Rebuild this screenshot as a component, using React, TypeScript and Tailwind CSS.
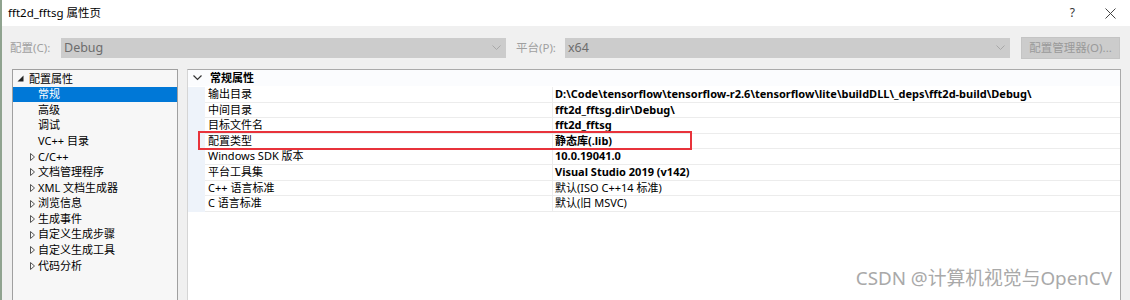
import React from 'react'

const treeItems = [
  { label: '配置属性', level: 0, open: true },
  { label: '常规', level: 1, selected: true },
  { label: '高级', level: 1 },
  { label: '调试', level: 1 },
  { label: 'VC++ 目录', level: 1 },
  { label: 'C/C++', level: 1, closed: true },
  { label: '文档管理程序', level: 1, closed: true },
  { label: 'XML 文档生成器', level: 1, closed: true },
  { label: '浏览信息', level: 1, closed: true },
  { label: '生成事件', level: 1, closed: true },
  { label: '自定义生成步骤', level: 1, closed: true },
  { label: '自定义生成工具', level: 1, closed: true },
  { label: '代码分析', level: 1, closed: true },
]

const props = [
  { name: '输出目录', value: 'D:\\Code\\tensorflow\\tensorflow-r2.6\\tensorflow\\lite\\buildDLL\\_deps\\fft2d-build\\Debug\\', bold: true },
  { name: '中间目录', value: 'fft2d_fftsg.dir\\Debug\\', bold: true },
  { name: '目标文件名', value: 'fft2d_fftsg', bold: true },
  { name: '配置类型', value: '静态库(.lib)', bold: true },
  { name: 'Windows SDK 版本', value: '10.0.19041.0', bold: true },
  { name: '平台工具集', value: 'Visual Studio 2019 (v142)', bold: true },
  { name: 'C++ 语言标准', value: '默认(ISO C++14 标准)', bold: false },
  { name: 'C 语言标准', value: '默认(旧 MSVC)', bold: false },
]

function Chevron() {
  return (
    <svg width="9" height="6" viewBox="0 0 9 6" className="text-[#a8a8a8]">
      <polyline points="0.5,0.5 4.5,4.5 8.5,0.5" fill="none" stroke="currentColor" strokeWidth="1" />
    </svg>
  )
}

function Combo({ value, width }: { value: string; width: string }) {
  return (
    <div className={`${width} h-[20px] bg-[#cccccc] flex items-center justify-between pl-[3px] pr-[5px] text-[#6d6d6d] text-[12.5px]`}>
      <span>{value}</span>
      <Chevron />
    </div>
  )
}

export default function App() {
  return (
    <div
      className="w-[1130px] h-[300px] bg-[#f0f0f0] overflow-hidden relative text-[11px] text-black border-l-2 border-[#8fa38f]"
      style={{ fontFamily: '"Noto Sans", "Noto Sans CJK SC", sans-serif' }}
    >
      {/* Title bar */}
      <div className="h-[26px] bg-white flex items-center justify-between pl-[6px] pr-[14px]">
        <span className="text-[11.5px]">fft2d_fftsg 属性页</span>
        <div className="flex items-center gap-[30px] text-[#333]">
          <span className="text-[12px]">?</span>
          <svg width="11" height="11" viewBox="0 0 11 11">
            <path d="M0.5 0.5 L10.5 10.5 M10.5 0.5 L0.5 10.5" stroke="#444" strokeWidth="1" />
          </svg>
        </div>
      </div>

      {/* Toolbar */}
      <div className="h-[43px] flex items-center pl-[8px] pt-[1px]">
        <span className="w-[51px] text-[#a0a0a0] text-[11.5px]">配置(C):</span>
        <Combo value="Debug" width="w-[445px]" />
        <span className="ml-[10px] w-[49px] text-[#a0a0a0] text-[11.5px]">平台(P):</span>
        <Combo value="x64" width="w-[445px]" />
        <div className="ml-[11px] w-[99px] h-[22px] bg-[#cccccc] border border-[#c4c4c4] flex items-center justify-center text-[#9a9a9a] text-[11.5px]">
          配置管理器(O)...
        </div>
      </div>

      {/* Main */}
      <div className="flex pl-[10px] gap-[9px] h-[240px]">
        {/* Tree */}
        <div className="w-[166px] h-full bg-[#f7f7f7] border border-[#a0a0a0] pt-[1px]">
          {treeItems.map((item) => (
            <div
              key={item.label}
              className={`h-[15.6px] flex items-center ${item.selected ? 'bg-[#0078d7] text-white' : ''}`}
            >
              {item.level === 0 ? (
                <>
                  <svg width="7" height="7" viewBox="0 0 7 7" className="ml-[4px] mr-[5px]">
                    <polygon points="6.5,0.5 6.5,6.5 0.5,6.5" fill="#222" />
                  </svg>
                  <span>{item.label}</span>
                </>
              ) : (
                <>
                  <span className="w-[25px] flex justify-end pr-[3px]">
                    {item.closed && (
                      <svg width="5" height="8" viewBox="0 0 5 8">
                        <polygon points="0.5,0.5 4.5,4 0.5,7.5" fill="none" stroke="#555" strokeWidth="1" />
                      </svg>
                    )}
                  </span>
                  <span>{item.label}</span>
                </>
              )}
            </div>
          ))}
        </div>

        {/* Property grid */}
        <div className="w-[934px] h-full bg-white border border-[#aaaaaa] border-l-[#d5d5d5] relative">
          <div className="h-[16px] flex items-center bg-[#fbfcfe]">
            <svg width="9" height="6" viewBox="0 0 9 6" className="ml-[5px] mr-[8px]">
              <polyline points="0.5,0.5 4.5,4.5 8.5,0.5" fill="none" stroke="#333" strokeWidth="1.2" />
            </svg>
            <span className="font-bold">常规属性</span>
          </div>
          <div className="pt-[1px]">
            {props.map((p) => (
              <div key={p.name} className="h-[15.6px] flex">
                <div className="w-[17px] bg-[#eef3fa]" />
                <div className="w-[348px] flex items-center pl-[3px] border-b border-[#ececec] border-r">
                  {p.name}
                </div>
                <div className={`flex-1 flex items-center pl-[2px] border-b border-[#ececec] ${p.bold ? 'font-bold' : ''}`}>
                  {p.value}
                </div>
              </div>
            ))}
          </div>
          {/* highlight box */}
          <div className="absolute left-[10px] top-[61px] w-[494px] h-[19px] border-2 border-[#e8333b] pointer-events-none" />
        </div>
      </div>

      {/* Watermark */}
      <div className="absolute right-[18px] bottom-[8px] text-[18.8px] text-[#a9a9a9] [text-shadow:0_0_1px_#ffffff]">
        CSDN @计算机视觉与OpenCV
      </div>
    </div>
  )
}
